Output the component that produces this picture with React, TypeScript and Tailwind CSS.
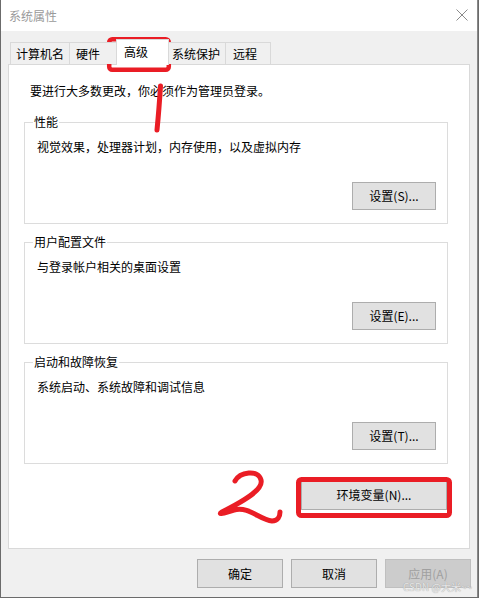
import React from "react";

function Btn({ label, className = "", disabled = false }: { label: string; className?: string; disabled?: boolean }) {
  return (
    <div
      className={
        "flex items-center justify-center border leading-[16px] " +
        (disabled
          ? "bg-[#cccccc] border-[#bfbfbf] text-[#a0a0a0] "
          : "bg-[#e1e1e1] border-[#adadad] text-black ") +
        className
      }
    >
      {label}
    </div>
  );
}

function Group({ title, desc, btn }: { title: string; desc: string; btn: string }) {
  return (
    <div className="relative ml-[15px] mr-[21px] border border-[#dcdcdc] pt-[16px] pb-[13px]">
      <span className="absolute left-[8px] top-[-9px] bg-white px-[1px] leading-[16px]">{title}</span>
      <div className="pl-[12px] leading-[16px]">{desc}</div>
      <div className="mt-[27px] flex justify-end pr-[11px]">
        <Btn label={btn} className="w-[84px] h-[28px]" />
      </div>
    </div>
  );
}

export default function App() {
  return (
    <div className="relative w-[479px] h-[598px] bg-[#6b6b6b] font-['Microsoft_YaHei','Noto_Sans_CJK_SC',sans-serif] text-[12px] text-black">
      <div className="absolute inset-0 mr-px mb-px ml-px flex flex-col bg-[#f0f0f0] border-r border-[#888] w-[477px] h-[597px]">
        {/* title bar */}
        <div className="h-[31px] bg-white flex items-center justify-between pl-[8px] pr-[9px] shrink-0">
          <span className="text-[#9a9a9a] leading-[16px]">系统属性</span>
          <svg width="12" height="12" viewBox="0 0 12 12" className="mt-[-1px]">
            <path d="M0.5 0.5 L11.5 11.5 M11.5 0.5 L0.5 11.5" stroke="#8a8a8a" strokeWidth="1" />
          </svg>
        </div>

        {/* tabs */}
        <div className="relative z-10 mt-[8px] ml-[9px] flex items-end h-[26px] -mb-px">
          <div className="w-[60px] h-[22px] mb-px border border-b-0 border-[#d9d9d9] bg-[#f0f0f0] flex items-center pl-[5px] leading-[16px]">计算机名</div>
          <div className="-ml-px w-[50px] h-[22px] mb-px border border-b-0 border-[#d9d9d9] bg-[#f0f0f0] flex items-center pl-[6px] leading-[16px]">硬件</div>
          <div className="relative z-10 -ml-[3px] w-[53px] h-[26px] border border-b-0 border-[#d9d9d9] bg-white flex items-center pl-[7px] pb-[1px] leading-[16px]">高级</div>
          <div className="-ml-px w-[58px] h-[22px] mb-px border border-b-0 border-[#d9d9d9] bg-[#f0f0f0] flex items-center pl-[3px] leading-[16px]">系统保护</div>
          <div className="-ml-px w-[46px] h-[22px] mb-px border border-b-0 border-[#d9d9d9] bg-[#f0f0f0] flex items-center pl-[7px] leading-[16px]">远程</div>
        </div>

        {/* panel */}
        <div className="ml-[7px] w-[462px] h-[485px] border border-[#d9d9d9] bg-white flex flex-col pt-[18px]">
          <div className="pl-[21px] leading-[16px]">要进行大多数更改，你必须作为管理员登录。</div>
          <div className="mt-[23px] flex flex-col gap-[18px]">
            <Group title="性能" desc="视觉效果，处理器计划，内存使用，以及虚拟内存" btn="设置(S)..." />
            <Group title="用户配置文件" desc="与登录帐户相关的桌面设置" btn="设置(E)..." />
            <Group title="启动和故障恢复" desc="系统启动、系统故障和调试信息" btn="设置(T)..." />
          </div>
          <div className="mt-[16px] flex justify-end pr-[22px]">
            <Btn label="环境变量(N)..." className="w-[146px] h-[30px]" />
          </div>
        </div>

        {/* bottom buttons */}
        <div className="mt-[10px] flex justify-end gap-[8px] pr-[6px]">
          <Btn label="确定" className="w-[86px] h-[29px]" />
          <Btn label="取消" className="w-[86px] h-[29px]" />
          <Btn label="应用(A)" disabled className="w-[86px] h-[29px]" />
        </div>
      </div>

      {/* watermark */}
      <span className="absolute left-[403px] top-[581px] text-[10px] leading-[12px] text-[#e8e8e8] [text-shadow:0_0_1px_#8a8a8a] font-['Noto_Sans_CJK_SC',sans-serif]">
        CSDN @大米~~
      </span>

      {/* red annotations */}
      <svg className="absolute inset-0 pointer-events-none" width="479" height="598" viewBox="0 0 479 598">
        <rect x="109.2" y="39.2" width="59.6" height="30.6" rx="3" fill="none" stroke="#ea1d25" strokeWidth="4.5" />
        <path d="M160.5 86 Q159 110 157 130" fill="none" stroke="#ea1d25" strokeWidth="5" strokeLinecap="round" />
        <path
          d="M235 481 C240 472 258 469 261 480 C264 491 236 505 222 512 C217 515 224 513 234 510 C249 506 260 520 272 521 C278 521 280 516 280 512"
          fill="none"
          stroke="#ea1d25"
          strokeWidth="5"
          strokeLinecap="round"
          strokeLinejoin="round"
        />
        <rect x="298.5" y="479.5" width="151" height="36" rx="3" fill="none" stroke="#ea1d25" strokeWidth="5" />
      </svg>
    </div>
  );
}
